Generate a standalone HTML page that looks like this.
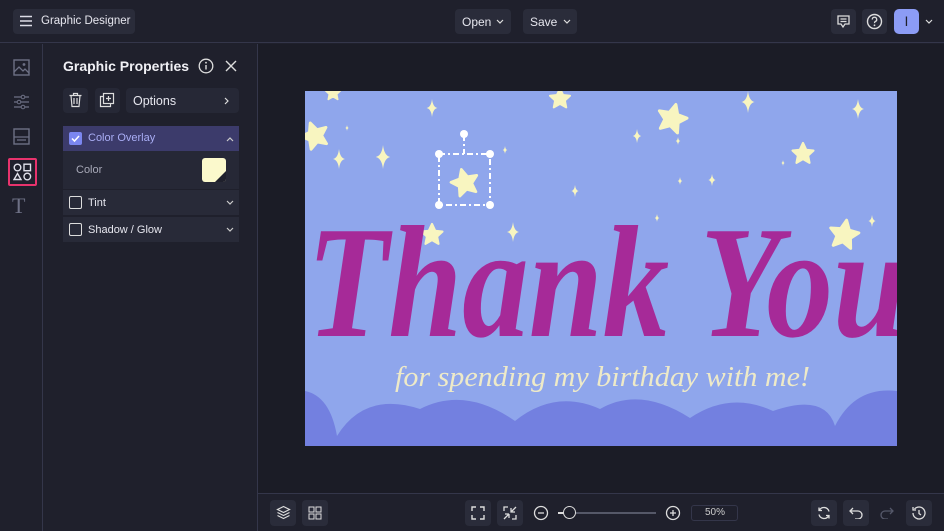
<!DOCTYPE html>
<html><head><style>
*{box-sizing:border-box;margin:0;padding:0}
body{width:944px;height:531px;background:#1f202c;font-family:"Liberation Sans",sans-serif;color:#e6e6ee;position:relative;overflow:hidden}
.abs{position:absolute}
.btn{position:absolute;background:#2a2c3a;border-radius:4px}
.top{left:0;top:0;width:944px;height:43px;border-bottom:1px solid #34364a;background:#1f202c}
.rail{left:0;top:44px;width:43px;height:487px;border-right:1px solid #34364a}
.panel{left:44px;top:44px;width:214px;height:487px;border-right:1px solid #34364a;background:#1f202c}
.bottom{left:258px;top:493px;width:686px;height:38px;border-top:1px solid #34364a;background:#1f202c}
.canvasbg{left:258px;top:44px;width:686px;height:449px;background:#1b1c26}
svg{display:block}
.t{font-size:12px;color:#e6e6ee}
</style></head><body>
<div class="abs top"></div>
<div class="btn" style="left:13px;top:9px;width:122px;height:25px"></div>
<svg class="abs" style="left:19px;top:15px" width="14" height="12"><path d="M1 1.5H13M1 6H13M1 10.5H13" stroke="#dcdce6" stroke-width="1.4"/></svg>
<div class="abs t" style="left:41px;top:15px;font-size:11.5px">Graphic Designer</div>
<div class="btn" style="left:455px;top:9px;width:56px;height:25px"></div>
<div class="abs t" style="left:462px;top:15px">Open</div>
<svg class="abs" style="left:496px;top:19px" width="8" height="6"><path d="M1 1l3 3 3-3" stroke="#ddd" fill="none" stroke-width="1.2"/></svg>
<div class="btn" style="left:523px;top:9px;width:54px;height:25px"></div>
<div class="abs t" style="left:530px;top:15px">Save</div>
<svg class="abs" style="left:563px;top:19px" width="8" height="6"><path d="M1 1l3 3 3-3" stroke="#ddd" fill="none" stroke-width="1.2"/></svg>
<div class="btn" style="left:831px;top:9px;width:25px;height:25px"></div>
<svg class="abs" style="left:836px;top:14px" width="15" height="15"><path d="M2 2h11v8H9l-2 3-2-3H2z M4.5 5h6M4.5 7.5h6" stroke="#ddd" fill="none" stroke-width="1.3"/></svg>
<div class="btn" style="left:862px;top:9px;width:25px;height:25px"></div>
<svg class="abs" style="left:866px;top:13px" width="17" height="17"><circle cx="8.5" cy="8.5" r="7" stroke="#ddd" fill="none" stroke-width="1.4"/><path d="M6.3 6.5a2.2 2.2 0 1 1 3 2c-.7.4-.8.8-.8 1.6" stroke="#ddd" fill="none" stroke-width="1.3"/><circle cx="8.5" cy="12.3" r=".9" fill="#ddd"/></svg>
<div class="abs" style="left:894px;top:9px;width:25px;height:25px;background:#8c9cf5;border-radius:5px;color:#1f202c;font-size:14px;text-align:center;line-height:25px">I</div>
<svg class="abs" style="left:925px;top:19px" width="8" height="6"><path d="M1 1l3 3 3-3" stroke="#ddd" fill="none" stroke-width="1.2"/></svg>

<div class="abs rail"></div>
<svg class="abs" style="left:13px;top:59px" width="17" height="17"><rect x="1" y="1" width="15" height="15" stroke="#6d7085" fill="none" stroke-width="1.4"/><path d="M1 13l5-5 4 4 2-2 4 4" stroke="#6d7085" fill="none" stroke-width="1.3"/><circle cx="11" cy="5.5" r="1.4" fill="#6d7085"/></svg>
<svg class="abs" style="left:13px;top:94px" width="17" height="16"><path d="M1 3h15M1 8h15M1 13h15" stroke="#6d7085" stroke-width="1.3"/><circle cx="10" cy="3" r="1.8" fill="#1f202c" stroke="#6d7085"/><circle cx="6" cy="8" r="1.8" fill="#1f202c" stroke="#6d7085"/><circle cx="10" cy="13" r="1.8" fill="#1f202c" stroke="#6d7085"/></svg>
<svg class="abs" style="left:13px;top:128px" width="17" height="17"><rect x="1" y="1" width="15" height="15" stroke="#6d7085" fill="none" stroke-width="1.4"/><path d="M1 9h15M4 12h9" stroke="#6d7085" stroke-width="1.3"/></svg>
<div class="abs" style="left:8px;top:158px;width:29px;height:28px;border:2px solid #e8336d;border-radius:2px"></div>
<svg class="abs" style="left:13px;top:163px" width="19" height="18"><circle cx="4.5" cy="4.5" r="3.3" stroke="#e0e0ea" fill="none" stroke-width="1.4"/><rect x="11" y="1.2" width="6.5" height="6.5" stroke="#e0e0ea" fill="none" stroke-width="1.4"/><path d="M4.5 10.5l3.5 6H1z" stroke="#e0e0ea" fill="none" stroke-width="1.4"/><circle cx="14.3" cy="13.5" r="3.3" stroke="#e0e0ea" fill="none" stroke-width="1.4"/></svg>
<div class="abs" style="left:12px;top:193px;font-family:'Liberation Serif',serif;font-size:22px;color:#6d7085">T</div>

<div class="abs panel"></div>
<div class="abs" style="left:63px;top:58px;font-size:14px;font-weight:bold;color:#f0f0f5">Graphic Properties</div>
<svg class="abs" style="left:198px;top:58px" width="16" height="16"><circle cx="8" cy="8" r="6.8" stroke="#ddd" fill="none" stroke-width="1.3"/><path d="M8 7v4.5" stroke="#ddd" stroke-width="1.4"/><circle cx="8" cy="4.7" r=".9" fill="#ddd"/></svg>
<svg class="abs" style="left:225px;top:60px" width="12" height="12"><path d="M1 1l10 10M11 1L1 11" stroke="#ddd" stroke-width="1.4"/></svg>
<div class="btn" style="left:63px;top:88px;width:25px;height:25px;background:#262836"></div>
<svg class="abs" style="left:68px;top:92px" width="15" height="16"><path d="M1.5 3.5h12M5.5 3.5V1.5h4v2M3 3.5l1 11h7l1-11M6 6v6M9 6v6" stroke="#ddd" fill="none" stroke-width="1.2"/></svg>
<div class="btn" style="left:95px;top:88px;width:25px;height:25px;background:#262836"></div>
<svg class="abs" style="left:99px;top:92px" width="16" height="16"><rect x="4.5" y="1.5" width="10" height="10" stroke="#ddd" fill="none" stroke-width="1.2"/><path d="M4.5 4.5h-3v10h10v-3M9.5 4v5M7 6.5h5" stroke="#ddd" fill="none" stroke-width="1.2"/></svg>
<div class="btn" style="left:126px;top:88px;width:113px;height:25px;background:#262836"></div>
<div class="abs t" style="left:133px;top:94px;font-size:12.5px">Options</div>
<svg class="abs" style="left:224px;top:97px" width="6" height="8"><path d="M1 1l3 3-3 3" stroke="#ddd" fill="none" stroke-width="1.2"/></svg>
<div class="abs" style="left:63px;top:126px;width:176px;height:25px;background:#3c3b6b"></div>
<div class="abs" style="left:69px;top:132px;width:13px;height:13px;background:#7b86f0;border-radius:2px"></div>
<svg class="abs" style="left:70px;top:133px" width="11" height="11"><path d="M2 5.5l2.5 2.5L9 3" stroke="#fff" fill="none" stroke-width="1.5"/></svg>
<div class="abs" style="left:88px;top:132px;font-size:11px;color:#a9adf5">Color Overlay</div>
<svg class="abs" style="left:226px;top:136px" width="8" height="6"><path d="M1 5l3-3 3 3" stroke="#ccc" fill="none" stroke-width="1.2"/></svg>
<div class="abs" style="left:63px;top:151px;width:176px;height:38px;background:#262836"></div>
<div class="abs" style="left:76px;top:164px;font-size:11px;color:#a8a9b8">Color</div>
<div class="abs" style="left:202px;top:158px;width:24px;height:24px;background:#fbf9cc;border-radius:3px;overflow:hidden"><svg width="24" height="24"><path d="M24 13V24H13z" fill="#1f202c"/></svg></div>
<div class="abs" style="left:63px;top:190px;width:176px;height:25px;background:#282a38"></div>
<div class="abs" style="left:69px;top:196px;width:13px;height:13px;border:1.4px solid #ddd;border-radius:2px"></div>
<div class="abs" style="left:88px;top:197px;font-size:11px">Tint</div>
<svg class="abs" style="left:226px;top:200px" width="8" height="6"><path d="M1 1l3 3 3-3" stroke="#ccc" fill="none" stroke-width="1.2"/></svg>
<div class="abs" style="left:63px;top:217px;width:176px;height:25px;background:#282a38"></div>
<div class="abs" style="left:69px;top:223px;width:13px;height:13px;border:1.4px solid #ddd;border-radius:2px"></div>
<div class="abs" style="left:88px;top:224px;font-size:11px">Shadow / Glow</div>
<svg class="abs" style="left:226px;top:227px" width="8" height="6"><path d="M1 1l3 3 3-3" stroke="#ccc" fill="none" stroke-width="1.2"/></svg>

<div class="abs canvasbg"></div>
<svg class="abs" style="left:305px;top:91px" width="592" height="355" viewBox="0 0 592 355">
<defs><path id="s" d="M0-10L2.9-3.8 9.5-3.1 4.6 1.4 5.9 8 0 4.6-5.9 8-4.6 1.4-9.5-3.1-2.9-3.8z" stroke-linejoin="round" stroke="#f8f5c0" stroke-width="2"/><path id="sp" d="M0-10Q1-1 6 0Q1 1 0 10Q-1 1-6 0Q-1-1 0-10z"/></defs>
<rect width="592" height="355" fill="#8fa6ec"/>
<g fill="#f8f5c0">
<use href="#s" transform="translate(10,45) rotate(-20) scale(1.4)"/>
<use href="#s" transform="translate(28,2) scale(.8)"/>
<use href="#s" transform="translate(255,8) scale(1.05)"/>
<use href="#s" transform="translate(367,28) rotate(15) scale(1.5)"/>
<use href="#s" transform="translate(498,63) scale(1.1)"/>
<use href="#s" transform="translate(160,92) rotate(-15) scale(1.4)"/>
<use href="#s" transform="translate(127,144) scale(1.1)"/>
<use href="#s" transform="translate(539,144) rotate(10) scale(1.5)"/>
<use href="#sp" transform="translate(78,66) scale(1.2)"/>
<use href="#sp" transform="translate(443,11) scale(1.1)"/>
<use href="#sp" transform="translate(34,68) scale(1)"/>
<use href="#sp" transform="translate(127,17) scale(.9)"/>
<use href="#sp" transform="translate(332,45) scale(.7)"/>
<use href="#sp" transform="translate(553,18) scale(1)"/>
<use href="#sp" transform="translate(208,141) scale(1)"/>
<use href="#sp" transform="translate(270,100) scale(.6)"/>
<use href="#sp" transform="translate(407,89) scale(.6)"/>
<use href="#sp" transform="translate(567,130) scale(.6)"/>
<use href="#sp" transform="translate(200,59) scale(.4)"/>
<use href="#sp" transform="translate(373,50) scale(.4)"/>
<use href="#sp" transform="translate(375,90) scale(.4)"/>
<use href="#sp" transform="translate(352,127) scale(.4)"/>
<use href="#sp" transform="translate(42,37) scale(.3)"/>
<use href="#sp" transform="translate(478,72) scale(.3)"/>
</g>
<g fill="none" stroke="#fff" stroke-width="2" stroke-dasharray="6 3 2 3">
<rect x="134" y="63" width="51" height="51"/><path d="M159 44V63"/></g>
<g fill="#fff"><circle cx="134" cy="63" r="4"/><circle cx="185" cy="63" r="4"/><circle cx="134" cy="114" r="4"/><circle cx="185" cy="114" r="4"/><circle cx="159" cy="43" r="4"/></g>
<text x="2" y="245" font-family="Liberation Serif,serif" font-style="italic" font-weight="bold" font-size="160" fill="#a62a98" textLength="600" lengthAdjust="spacingAndGlyphs">Thank You</text>
<text x="90" y="295" font-family="Liberation Serif,serif" font-style="italic" font-size="28" fill="#eeeac8" textLength="415" lengthAdjust="spacingAndGlyphs">for spending my birthday with me!</text>
<path d="M0 300Q25 305 32 345Q60 300 115 318Q160 295 210 330Q250 298 295 318Q335 295 385 327Q425 300 468 320Q520 302 530 335Q550 295 592 300V355H0z" fill="#7380e0"/>
</svg>

<div class="abs bottom"></div>
<div class="btn" style="left:270px;top:500px;width:26px;height:26px"></div>
<svg class="abs" style="left:276px;top:505px" width="15" height="15"><path d="M7.5 1.5l6 3-6 3-6-3z M1.5 7.5l6 3 6-3M1.5 10.5l6 3 6-3" stroke="#ddd" fill="none" stroke-width="1.2"/></svg>
<div class="btn" style="left:302px;top:500px;width:26px;height:26px"></div>
<svg class="abs" style="left:308px;top:506px" width="14" height="14"><rect x="1" y="1" width="5" height="5" stroke="#ddd" fill="none"/><rect x="8" y="1" width="5" height="5" stroke="#ddd" fill="none"/><rect x="1" y="8" width="5" height="5" stroke="#ddd" fill="none"/><rect x="8" y="8" width="5" height="5" stroke="#ddd" fill="none"/></svg>
<div class="btn" style="left:465px;top:500px;width:26px;height:26px"></div>
<svg class="abs" style="left:471px;top:506px" width="14" height="14"><path d="M1 5V1h4M9 1h4v4M13 9v4H9M5 13H1V9" stroke="#ddd" fill="none" stroke-width="1.4"/></svg>
<div class="btn" style="left:497px;top:500px;width:26px;height:26px"></div>
<svg class="abs" style="left:503px;top:506px" width="14" height="14"><path d="M1 5V1h4M13 1L8 6M8 2v4h4M6 8v4M6 8H2M6 8l-5 5M13 9v4H9" stroke="#ddd" fill="none" stroke-width="1.3"/></svg>
<svg class="abs" style="left:533px;top:505px" width="16" height="16"><circle cx="8" cy="8" r="6.5" stroke="#ddd" fill="none" stroke-width="1.3"/><path d="M5 8h6" stroke="#ddd" stroke-width="1.3"/></svg>
<div class="abs" style="left:558px;top:512px;width:98px;height:2px;background:#555868"></div>
<div class="abs" style="left:558px;top:512px;width:8px;height:2px;background:#ddd"></div>
<div class="abs" style="left:563px;top:506px;width:13px;height:13px;border:1.6px solid #ddd;border-radius:50%;background:#1f202c"></div>
<svg class="abs" style="left:665px;top:505px" width="16" height="16"><circle cx="8" cy="8" r="6.5" stroke="#ddd" fill="none" stroke-width="1.3"/><path d="M5 8h6M8 5v6" stroke="#ddd" stroke-width="1.3"/></svg>
<div class="abs" style="left:691px;top:505px;width:47px;height:16px;border:1px solid #34364a;border-radius:3px;font-size:10px;color:#ccc;text-align:right;padding-right:12px;line-height:14px">50%</div>
<div class="btn" style="left:811px;top:500px;width:26px;height:26px"></div>
<svg class="abs" style="left:817px;top:506px" width="14" height="14"><path d="M12 5.5A5.2 5.2 0 0 0 2.5 4M2 8.5A5.2 5.2 0 0 0 11.5 10M2 1.5v3h3M12 12.5v-3H9" stroke="#ddd" fill="none" stroke-width="1.3"/></svg>
<div class="btn" style="left:843px;top:500px;width:26px;height:26px"></div>
<svg class="abs" style="left:849px;top:507px" width="14" height="12"><path d="M4 1L1 4l3 3M1 4h8a4 4 0 0 1 0 8H6" stroke="#ddd" fill="none" stroke-width="1.3"/></svg>
<svg class="abs" style="left:880px;top:507px" width="14" height="12"><path d="M10 1l3 3-3 3M13 4H5a4 4 0 0 0 0 8h3" stroke="#55586a" fill="none" stroke-width="1.3"/></svg>
<div class="btn" style="left:906px;top:500px;width:26px;height:26px"></div>
<svg class="abs" style="left:911px;top:505px" width="16" height="16"><path d="M3.5 4A6 6 0 1 1 2 8M2 2v3h3M8 5v3.5l2 1.5" stroke="#ddd" fill="none" stroke-width="1.3"/></svg>
</body></html>
